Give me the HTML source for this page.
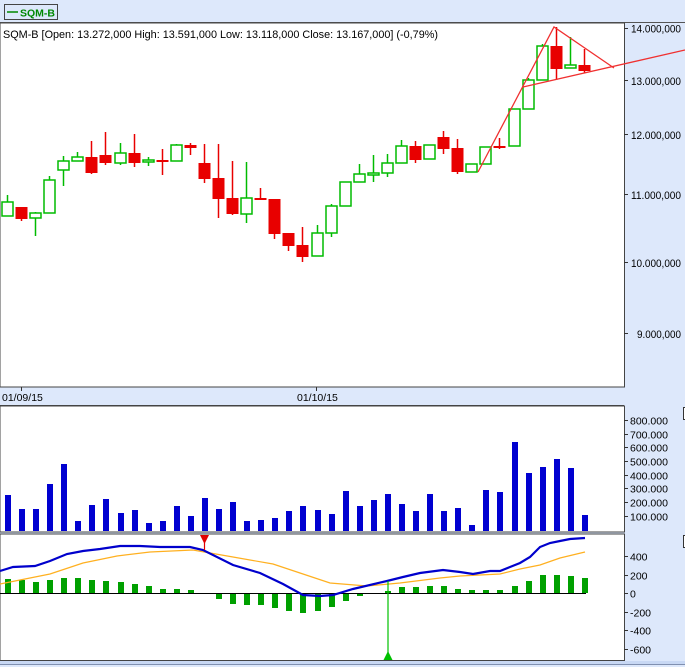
<!DOCTYPE html>
<html><head><meta charset="utf-8"><style>
html,body{margin:0;padding:0;width:685px;height:667px;overflow:hidden;background:#dde8fb}
svg{display:block}
text{font-family:"Liberation Sans",Arial,sans-serif;fill:#000}
</style></head><body>
<svg id="s" width="685" height="667" xmlns="http://www.w3.org/2000/svg">
<rect x="0" y="0" width="685" height="667" fill="#dde8fb"/>
<line x1="0" y1="22.5" x2="685" y2="22.5" stroke="#555" stroke-width="1"/>
<rect x="4.5" y="4.5" width="53" height="15" fill="#dde8fb" stroke="#444"/>
<line x1="7" y1="12" x2="18" y2="12" stroke="#008800" stroke-width="1.5"/>
<text x="20" y="16.5" font-size="10.5" font-weight="bold" style="fill:#008800">SQM-B</text>
<rect x="0" y="23" width="624.5" height="364" fill="#fff" stroke="#444" stroke-width="1"/>
<text x="3" y="38" font-size="11" textLength="435" lengthAdjust="spacingAndGlyphs">SQM-B [Open: 13.272,000  High: 13.591,000  Low: 13.118,000  Close: 13.167,000] (-0,79%)</text>
<g id="candles"></g>
<g stroke="#f03030" stroke-width="1.3" fill="none">
<polyline points="478,172 554,27 614,68"/>
<line x1="523" y1="87" x2="685" y2="50"/>
</g>
<g font-size="11">
<line x1="624" y1="28.5" x2="628" y2="28.5" stroke="#333"/><text x="631" y="32.5" textLength="50" lengthAdjust="spacingAndGlyphs">14.000,000</text>
<line x1="624" y1="80.5" x2="628" y2="80.5" stroke="#333"/><text x="631" y="85" textLength="50" lengthAdjust="spacingAndGlyphs">13.000,000</text>
<line x1="624" y1="134.5" x2="628" y2="134.5" stroke="#333"/><text x="631" y="139" textLength="50" lengthAdjust="spacingAndGlyphs">12.000,000</text>
<line x1="624" y1="194.5" x2="628" y2="194.5" stroke="#333"/><text x="631" y="199" textLength="50" lengthAdjust="spacingAndGlyphs">11.000,000</text>
<line x1="624" y1="262.5" x2="628" y2="262.5" stroke="#333"/><text x="631" y="267" textLength="50" lengthAdjust="spacingAndGlyphs">10.000,000</text>
<line x1="624" y1="333.5" x2="628" y2="333.5" stroke="#333"/><text x="637" y="338" textLength="44" lengthAdjust="spacingAndGlyphs">9.000,000</text>
</g>
<line x1="21.5" y1="387" x2="21.5" y2="391" stroke="#333"/>
<line x1="316.5" y1="387" x2="316.5" y2="391" stroke="#333"/>
<text x="2" y="401" font-size="10.5">01/09/15</text>
<text x="297" y="401" font-size="10.5">01/10/15</text>
<line x1="0" y1="405.5" x2="624" y2="405.5" stroke="#444"/>
<rect x="0" y="406" width="624.5" height="126" fill="#fff" stroke="#444"/>
<g id="vol"></g>
<g font-size="10.5">
<line x1="624" y1="420.5" x2="628" y2="420.5" stroke="#333"/><text x="630" y="424.5">800.000</text>
<line x1="624" y1="434.5" x2="628" y2="434.5" stroke="#333"/><text x="630" y="438.5">700.000</text>
<line x1="624" y1="447.5" x2="628" y2="447.5" stroke="#333"/><text x="630" y="451.5">600.000</text>
<line x1="624" y1="461.5" x2="628" y2="461.5" stroke="#333"/><text x="630" y="465.5">500.000</text>
<line x1="624" y1="475.5" x2="628" y2="475.5" stroke="#333"/><text x="630" y="479.5">400.000</text>
<line x1="624" y1="488.5" x2="628" y2="488.5" stroke="#333"/><text x="630" y="492.5">300.000</text>
<line x1="624" y1="502.5" x2="628" y2="502.5" stroke="#333"/><text x="630" y="506.5">200.000</text>
<line x1="624" y1="516.5" x2="628" y2="516.5" stroke="#333"/><text x="630" y="520.5">100.000</text>
</g>
<rect x="683.5" y="407.5" width="4" height="12" fill="#fff" stroke="#333"/>
<rect x="0" y="534" width="624.5" height="126.5" fill="#fff" stroke="#444"/>
<g id="macd"></g>
<line x1="0" y1="593.5" x2="586" y2="593.5" stroke="#000"/>
<polyline fill="none" stroke="#ffb020" stroke-width="1.2" points="0,584 20,580 50,574 83,563 117,556 150,552 193,550 233,557 273,564 300,573 330,583 367,586 400,583 440,578 460,576 480,575 500,574 520,569 540,565 560,558 585,552"/>
<polyline fill="none" stroke="#0000cc" stroke-width="2.2" points="0,571 13,567 35,566 50,561 67,554 83,551 100,549 120,546 140,546 160,547 190,547 203,550 233,565 260,573 283,584 303,595 320,596 333,595 353,589 387,581 403,577 420,573 443,570 460,572 473,574 490,571 500,571 510,567 520,563 530,557 540,547 550,543 560,541 570,539 585,538"/>
<line x1="204.5" y1="535" x2="204.5" y2="550" stroke="#e00000" stroke-width="1.2"/>
<polygon points="200,535 209,535 204.5,544" fill="#e00000"/>
<line x1="388" y1="581" x2="388" y2="660" stroke="#00c000" stroke-width="1.2"/>
<polygon points="383.5,660 392.5,660 388,651" fill="#00c000"/>
<g font-size="10.5">
<line x1="624" y1="556.5" x2="628" y2="556.5" stroke="#333"/><text x="630" y="560.5">400</text>
<line x1="624" y1="575.5" x2="628" y2="575.5" stroke="#333"/><text x="630" y="579.5">200</text>
<line x1="624" y1="593.5" x2="628" y2="593.5" stroke="#333"/><text x="630" y="597.5">0</text>
<line x1="624" y1="612.5" x2="628" y2="612.5" stroke="#333"/><text x="630" y="616.5">-200</text>
<line x1="624" y1="630.5" x2="628" y2="630.5" stroke="#333"/><text x="630" y="634.5">-400</text>
<line x1="624" y1="649.5" x2="628" y2="649.5" stroke="#333"/><text x="630" y="653.5">-600</text>
</g>
<rect x="683.5" y="535.5" width="4" height="12" fill="#fff" stroke="#333"/>
<rect x="0" y="661" width="685" height="3" fill="#c8d8f4"/>
<rect x="0" y="664" width="685" height="1" fill="#8090b0"/>
<rect x="0" y="665" width="685" height="2" fill="#dde8fb"/>
</svg>
<script>
var NS="http://www.w3.org/2000/svg";
function el(p,t,a){var e=document.createElementNS(NS,t);for(var k in a)e.setAttribute(k,a[k]);p.appendChild(e);return e;}
var C=[[1,202,216,195,216],[0,207,219,207,221],[1,213,218,212,236],[1,180,213,176,213],[1,161,170,156,186],
[1,157,161,152,161],[0,157,173,141,174],[0,155,163,132,165],[1,153,163,143,165],[0,153,163,134,167],
[1,160,162,157,166],[0,160,162,149,175],[1,145,161,144,161],[0,145,148,143,155],[0,163,179,144,183],
[0,178,199,144,218],[0,198,214,161,215],[1,198,214,162,223],[0,198,200,188,200],[0,199,234,199,239],
[0,233,246,233,251],[0,245,257,227,262],[1,233,256,225,256],[1,206,233,204,237],[1,182,206,182,206],
[1,174,182,164,182],[1,173,174,155,182],[1,163,173,154,177],[1,146,163,140,163],[0,146,160,141,163],
[1,145,159,145,159],[0,137,149,131,154],[0,148,172,139,174],[1,164,172,164,172],[1,147,164,147,164],
[0,146,148,138,149],[1,109,146,109,146],[1,80,109,78,109],[1,46,80,44,80],[0,46,69,27,80],
[1,65,68,37,68],[0,65,71,49,73]];
var g=document.getElementById("candles");
C.forEach(function(c,i){var x=Math.round(7+14.07*i)+0.5;var col=c[0]?"#00bb00":"#e80000";
el(g,"line",{x1:x,y1:c[3],x2:x,y2:c[4],stroke:col,"stroke-width":1.5});
var h=Math.max(c[2]-c[1],2);
if(c[0])el(g,"rect",{x:x-5.5,y:c[1],width:11,height:h,fill:"#fff",stroke:col,"stroke-width":1.5});
else el(g,"rect",{x:x-6,y:c[1],width:12,height:h,fill:col});});
var V=[495,509,509,484,464,521,505,499,513,510,523,521,506,516,498,509,502,521,520,518,511,506,510,514,491,506,500,494,504,511,494,511,508,525,490,492,442,473,467,459,468,515];
var gv=document.getElementById("vol");
V.forEach(function(v,i){var x=Math.round(8+14.07*i);el(gv,"rect",{x:x-3,y:v,width:6,height:531-v,fill:"#0000d0"});});
var M=[579,580,582,580,578,578,580,581,582,584,586,589,589,590,null,599,604,605,605,608,611,613,611,607,601,596,null,591,587,587,586,586,589,590,590,590,586,581,575,575,576,578];
var gm=document.getElementById("macd");
M.forEach(function(v,i){if(v==null)return;var x=Math.round(8+14.07*i);var y0=Math.min(v,593),y1=Math.max(v,593);
el(gm,"rect",{x:x-3,y:y0,width:6,height:y1-y0,fill:"#00a000"});});
</script>
</body></html>
